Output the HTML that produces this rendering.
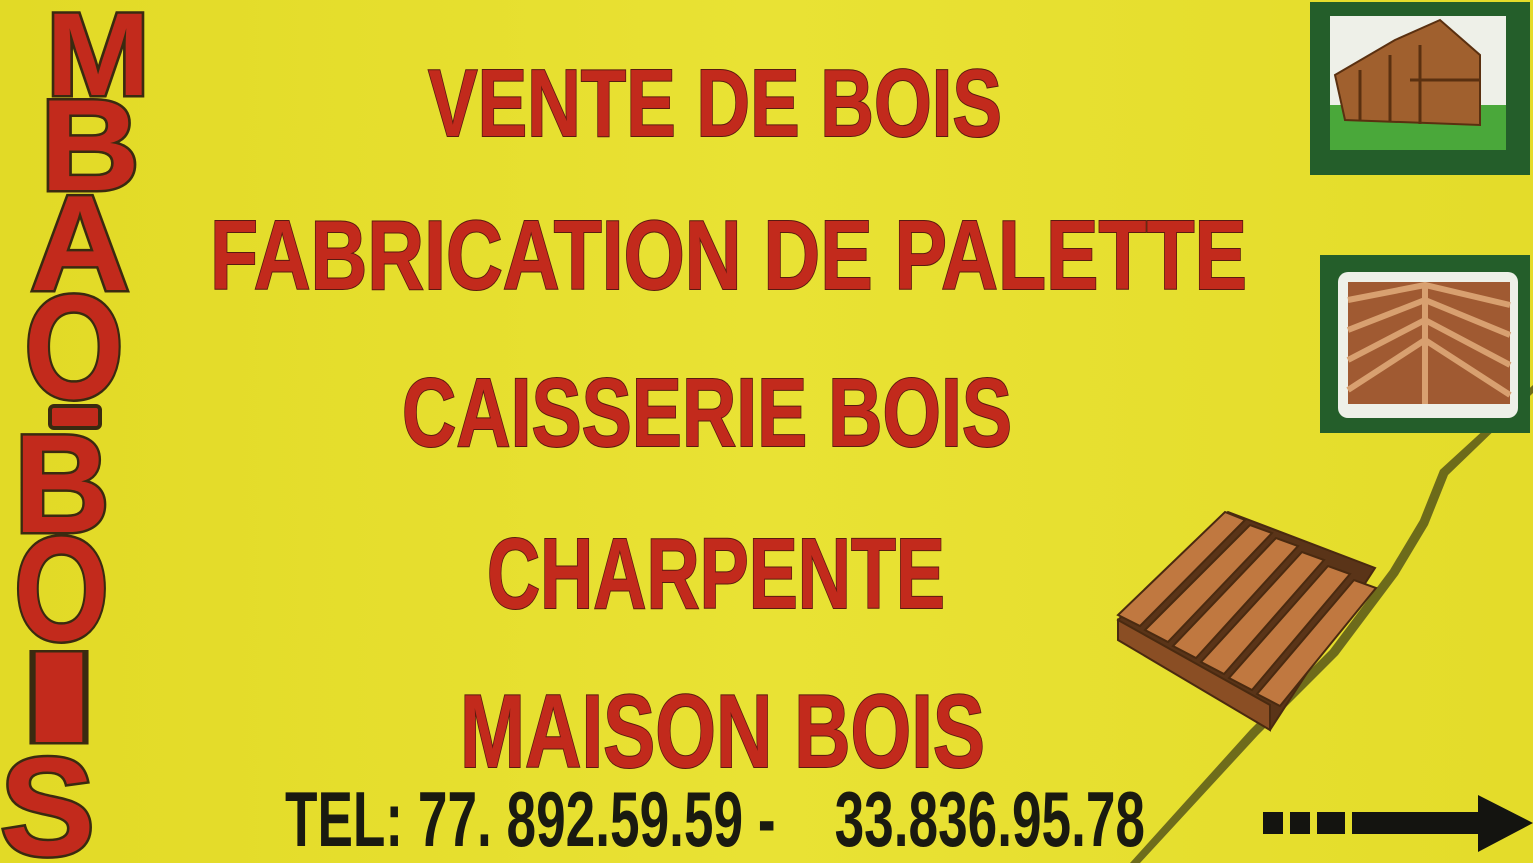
<!DOCTYPE html>
<html><head><meta charset="utf-8"><style>
html,body{margin:0;padding:0;width:1533px;height:863px;overflow:hidden;background:#e6df2c}
svg{display:block}
</style></head><body>
<svg width="1533" height="863" viewBox="0 0 1533 863" xmlns="http://www.w3.org/2000/svg">
<defs>
<linearGradient id="bg" x1="0" y1="0" x2="1" y2="0">
<stop offset="0" stop-color="#e2da26"/><stop offset="0.5" stop-color="#e9e234"/><stop offset="1" stop-color="#e4dc2a"/>
</linearGradient>
</defs>
<rect width="1533" height="863" fill="url(#bg)"/>
<!-- shadow line -->
<path d="M1533 385 L1440 470 L1420 520 L1390 570 L1330 650 L1250 730 L1130 863 L1140 863 L1258 735 L1338 655 L1398 575 L1428 525 L1448 475 L1533 393Z" fill="#3a3a14" opacity="0.7"/>
<g font-family="'Liberation Sans Narrow','Liberation Sans',sans-serif" font-weight="bold" fill="#c22a1c" stroke="#5a1a10" stroke-width="2" paint-order="stroke">
<text x="428" y="136" font-size="96" textLength="574" lengthAdjust="spacingAndGlyphs">VENTE DE BOIS</text>
<text x="210" y="289" font-size="98" textLength="1037" lengthAdjust="spacingAndGlyphs">FABRICATION DE PALETTE</text>
<text x="402" y="446" font-size="97" textLength="610" lengthAdjust="spacingAndGlyphs">CAISSERIE BOIS</text>
<text x="487" y="608" font-size="100" textLength="458" lengthAdjust="spacingAndGlyphs">CHARPENTE</text>
<text x="460" y="767" font-size="104" textLength="525" lengthAdjust="spacingAndGlyphs">MAISON BOIS</text>
</g>
<text x="285" y="846" font-family="'Liberation Sans Narrow','Liberation Sans',sans-serif" font-weight="bold" font-size="78" fill="#1a1a10" textLength="860" lengthAdjust="spacingAndGlyphs">TEL: 77. 892.59.59 -&#160;&#160;&#160;&#160;33.836.95.78</text>
<!-- vertical name -->
<g font-family="'Liberation Sans Narrow','Liberation Sans',sans-serif" font-weight="bold" fill="#c22a1c" stroke="#3a2a10" stroke-width="5" paint-order="stroke">
<text x="46" y="95" font-size="118" textLength="104" lengthAdjust="spacingAndGlyphs">M</text>
<text x="40" y="190" font-size="130" textLength="100" lengthAdjust="spacingAndGlyphs">B</text>
<text x="30" y="290" font-size="136" textLength="100" lengthAdjust="spacingAndGlyphs">A</text>
<text x="24" y="398" font-size="148" textLength="100" lengthAdjust="spacingAndGlyphs">O</text>
<text x="14" y="640" font-size="148" textLength="95" lengthAdjust="spacingAndGlyphs">O</text>
<text x="14" y="532" font-size="140" textLength="96" lengthAdjust="spacingAndGlyphs">B</text>
<text x="14" y="742" font-size="130" textLength="90" lengthAdjust="spacingAndGlyphs">I</text>
<text x="0" y="855" font-size="140" textLength="95" lengthAdjust="spacingAndGlyphs">S</text>
</g>
<rect x="50" y="406" width="50" height="22" rx="4" fill="#c22a1c" stroke="#3a2a10" stroke-width="4"/>
<!-- picture 1 -->
<rect x="1310" y="2" width="220" height="173" fill="#245e2a"/>
<rect x="1330" y="16" width="176" height="134" fill="#eef0e8"/>
<rect x="1330" y="105" width="176" height="45" fill="#4aa83a"/>
<polygon points="1335,75 1395,40 1440,20 1480,55 1480,125 1345,120" fill="#a0602e" stroke="#5a3010" stroke-width="2"/>
<path d="M1360 70 L1360 120 M1390 55 L1390 122 M1420 45 L1420 124 M1410 80 L1480 80" stroke="#5a3010" stroke-width="3"/>
<!-- picture 2 -->
<rect x="1320" y="255" width="210" height="178" fill="#245e2a"/>
<rect x="1338" y="272" width="180" height="146" rx="10" fill="#eef0e8"/>
<rect x="1348" y="282" width="162" height="122" fill="#a05a32"/>
<path d="M1348 300 L1425 285 L1510 305 M1348 330 L1425 300 L1510 335 M1348 360 L1425 320 L1510 365 M1348 390 L1425 340 L1510 395 M1425 285 L1425 404" stroke="#d8a070" stroke-width="6" fill="none"/>
<!-- pallet -->
<g stroke="#4a2a10" stroke-width="2">
<polygon points="1118,620 1228,512 1375,568 1270,730" fill="#5a3418"/>
<g fill="#c07840">
<polygon points="1118,615 1225,512 1245,520 1140,626"/>
<polygon points="1145,630 1250,525 1272,533 1168,642"/>
<polygon points="1173,646 1276,538 1298,546 1196,658"/>
<polygon points="1201,662 1302,552 1324,560 1224,674"/>
<polygon points="1229,678 1328,566 1350,574 1252,690"/>
<polygon points="1257,694 1354,580 1376,588 1280,706"/>
</g>
<polygon points="1118,620 1270,705 1270,730 1118,640" fill="#8a4e24"/>
</g>
<!-- arrow -->
<g fill="#141410">
<rect x="1263" y="812" width="20" height="22"/>
<rect x="1290" y="812" width="20" height="22"/>
<rect x="1317" y="812" width="28" height="22"/>
<rect x="1352" y="812" width="130" height="22"/>
<polygon points="1478,795 1533,823 1478,852"/>
</g>
</svg>
</body></html>
